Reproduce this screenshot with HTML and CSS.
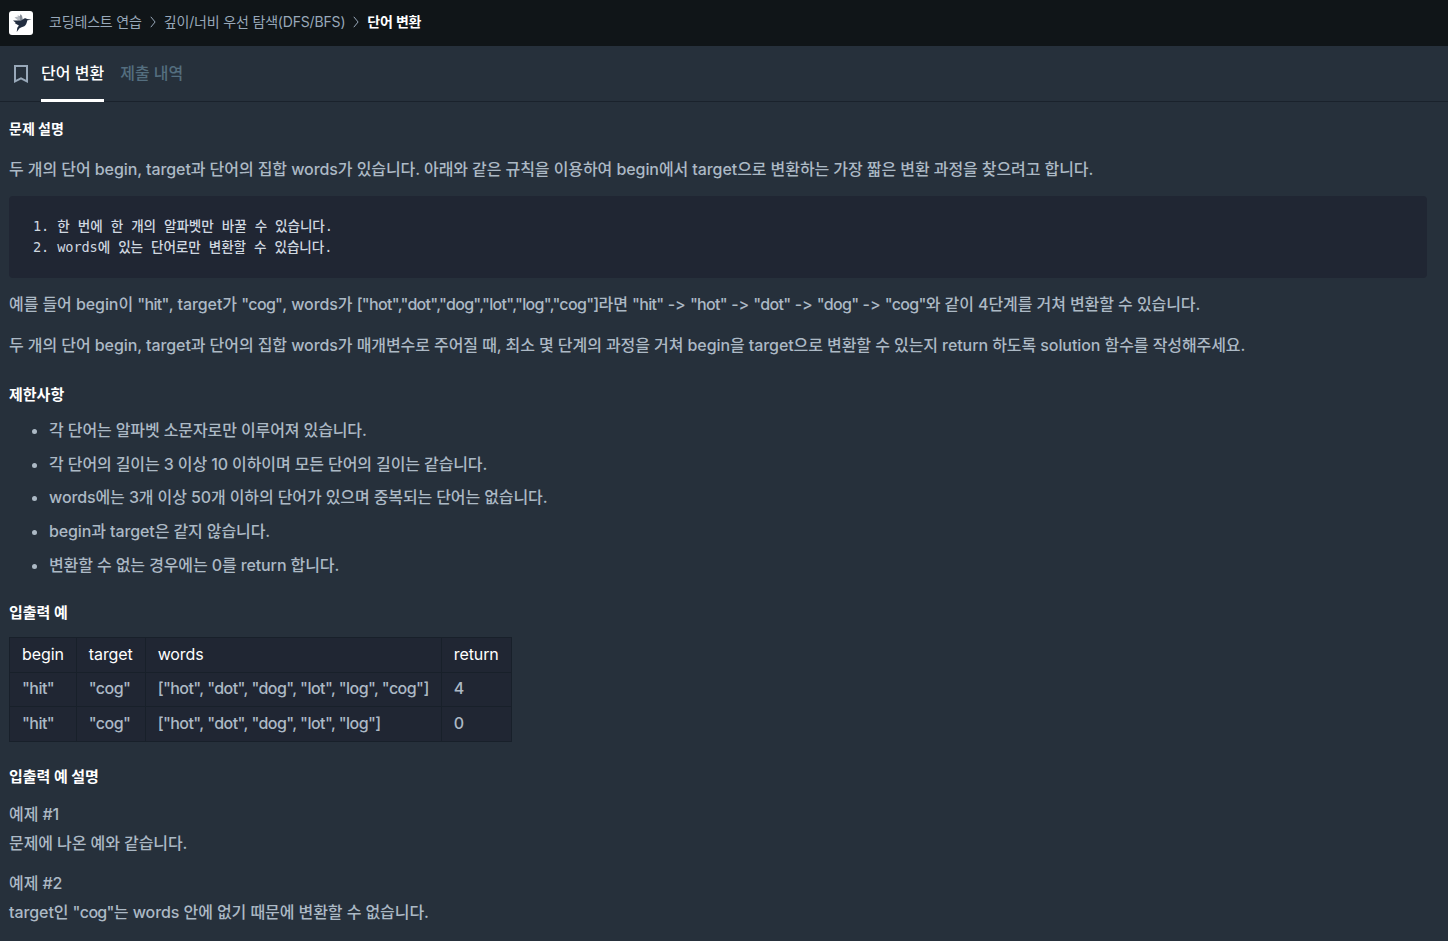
FILE: index.html
```html
<!DOCTYPE html>
<html lang="ko">
<head>
    <meta charset="UTF-8">
    <meta name="viewport" content="width=device-width, initial-scale=1.0">
    <title>코딩테스트 연습 - 단어 변환</title>
    <link rel="stylesheet" href="styles.css">
</head>
<body>

<header class="navbar">
    <a class="logo" href="#">
        <svg width="24" height="24" viewBox="0 0 24 24">
            <path fill="#b4b9c0" d="M5.5 6.4l2-.7 1 .5.3-2.2 1.8 1.6 1.2-2.4 1.3 2.2.6 3.8-4 .6z"/>
            <path fill="#848b95" d="M10.6 5.6l1.2-2.4 1.3 2.2.6 3.8-2.4.3z"/>
            <path fill="#222d3f" d="M4 9.4l8 .2 2.2-1.3c.6-.8 1.6-1.2 2.8-.9l1.2.7 4.4.6-4.2.6c-.3 1.1-.6 2.6-1.2 3.8-.9 1.9-2.6 2.9-4.7 3.2l-2 .9-2.8 3.7.6-4.1 1.6-2.2-2.3-1.4-1.9-1.2 1-.3z"/>
        </svg>
    </a>
    <ol class="breadcrumb">
        <li>코딩테스트 연습</li>
        <li>
            <svg class="arrow" width="6" height="12" viewBox="0 0 6 12"><path d="M.8.8l4.3 5.2L.8 11.2"/></svg>
            깊이/너비 우선 탐색(DFS/BFS)
        </li>
        <li class="current">
            <svg class="arrow" width="6" height="12" viewBox="0 0 6 12"><path d="M.8.8l4.3 5.2L.8 11.2"/></svg>
            단어 변환
        </li>
    </ol>
</header>

<nav class="tabs">
    <button class="bookmark" aria-label="북마크">
        <svg width="14" height="18" viewBox="0 0 14 18"><path d="M1 1h12v15.4l-6-3-6 3z"/></svg>
    </button>
    <a class="tab active" href="#">단어 변환</a>
    <a class="tab" href="#">제출 내역</a>
</nav>

<main class="guide">
    <h6 class="guide-title">문제 설명</h6>
    <p>두 개의 단어 begin, target과 단어의 집합 words가 있습니다. 아래와 같은 규칙을 이용하여 begin에서 target으로 변환하는 가장 짧은 변환 과정을 찾으려고 합니다.</p>
    <pre class="code">1. 한 번에 한 개의 알파벳만 바꿀 수 있습니다.
2. words에 있는 단어로만 변환할 수 있습니다.</pre>
    <p>예를 들어 begin이 <span class="literal">"hit"</span>, target가 <span class="literal">"cog"</span>, words가 <span class="literal">["hot","dot","dog","lot","log","cog"]</span>라면 <span class="literal">"hit"</span> -&gt; <span class="literal">"hot"</span> -&gt; <span class="literal">"dot"</span> -&gt; <span class="literal">"dog"</span> -&gt; <span class="literal">"cog"</span>와 같이 4단계를 거쳐 변환할 수 있습니다.</p>
    <p>두 개의 단어 begin, target과 단어의 집합 words가 매개변수로 주어질 때, 최소 몇 단계의 과정을 거쳐 begin을 target으로 변환할 수 있는지 return 하도록 solution 함수를 작성해주세요.</p>

    <h5>제한사항</h5>
    <ul>
        <li>각 단어는 알파벳 소문자로만 이루어져 있습니다.</li>
        <li>각 단어의 길이는 3 이상 10 이하이며 모든 단어의 길이는 같습니다.</li>
        <li>words에는 3개 이상 50개 이하의 단어가 있으며 중복되는 단어는 없습니다.</li>
        <li>begin과 target은 같지 않습니다.</li>
        <li>변환할 수 없는 경우에는 0를 return 합니다.</li>
    </ul>

    <h5>입출력 예</h5>
    <table>
        <thead>
            <tr>
                <th>begin</th>
                <th>target</th>
                <th>words</th>
                <th>return</th>
            </tr>
        </thead>
        <tbody>
            <tr>
                <td>"hit"</td>
                <td>"cog"</td>
                <td>["hot", "dot", "dog", "lot", "log", "cog"]</td>
                <td>4</td>
            </tr>
            <tr>
                <td>"hit"</td>
                <td>"cog"</td>
                <td>["hot", "dot", "dog", "lot", "log"]</td>
                <td>0</td>
            </tr>
        </tbody>
    </table>

    <h5 class="explain">입출력 예 설명</h5>
    <p>예제 #1<br>문제에 나온 예와 같습니다.</p>
    <p>예제 #2<br>target인 <span class="literal">"cog"</span>는 words 안에 없기 때문에 변환할 수 없습니다.</p>
</main>

</body>
</html>
```
FILE: styles.css
```css
* {
    box-sizing: border-box;
}
body {
    margin: 0;
    min-height: 941px;
    overflow: hidden;
    background: #26303b;
    color: #acb9c5;
    font-family: Inter, "Noto Sans CJK KR", sans-serif;
    font-size: 16px;
    font-weight: 400;
    font-feature-settings: "calt" 0;
}
a {
    color: inherit;
    text-decoration: none;
}
.navbar {
    display: flex;
    align-items: center;
    height: 46px;
    padding: 0 9px;
    background: #101518;
}
.logo {
    width: 24px;
    height: 24px;
    border-radius: 3px;
    background: #fff;
}
.logo svg {
    display: block;
}
.breadcrumb {
    display: flex;
    margin: 0 0 3px;
    padding: 0 0 0 16px;
    list-style: none;
    color: #98a8b9;
    font-size: 14px;
    line-height: 20px;
    letter-spacing: -0.17px;
}
.breadcrumb li {
    display: flex;
    align-items: center;
}
.breadcrumb .current {
    color: #fff;
    font-weight: 700;
}
.arrow {
    margin: 0 8px;
    fill: none;
    stroke: #98a8b9;
}
.tabs {
    display: flex;
    height: 56px;
    padding-left: 14px;
    border-bottom: 1px solid #1a222c;
}
.bookmark {
    width: 14px;
    margin-right: 13px;
    padding: 0;
    border: 0;
    background: none;
}
.bookmark svg {
    display: block;
    fill: none;
    stroke: #98a8b9;
    stroke-width: 2;
}
.tab {
    height: 56px;
    margin-right: 16px;
    color: #546e7f;
    font-weight: 500;
    line-height: 54px;
}
.tab.active {
    border-bottom: 3px solid #fff;
    color: #fff;
}
.guide {
    padding: 17px 21px 0 9px;
}
.guide-title,
h5 {
    margin: 0;
    color: #fff;
    font-size: 14px;
    font-weight: 700;
    line-height: 20px;
}
.guide-title {
    margin-bottom: 16px;
}
p {
    margin: 0 0 12px;
    font-weight: 500;
    line-height: 28.8px;
    letter-spacing: -0.08px;
    white-space: nowrap;
}
.literal {
    letter-spacing: -0.68px;
}
.code {
    height: 82px;
    margin: 0 0 12px;
    padding: 20px 24px;
    border-radius: 4px;
    background: #202633;
    color: #d0d8e0;
    font-family: "DejaVu Sans Mono", "Noto Sans CJK KR", monospace;
    font-size: 13.6px;
    font-weight: 500;
    line-height: 21px;
    letter-spacing: -0.1px;
}
h5 {
    margin-top: 25.7px;
    font-size: 15px;
}
ul {
    margin: 13px 0 0;
    padding-left: 40px;
}
ul li {
    margin-bottom: 9.7px;
    font-weight: 500;
    line-height: 24px;
    letter-spacing: -0.11px;
}
table {
    margin-top: 14.5px;
    border-collapse: collapse;
    background: #202633;
}
th, td {
    height: 34.6px;
    padding: 0 12px 2px;
    border: 1px solid #18202a;
    font-weight: 400;
    text-align: left;
}
th {
    color: #fff;
    letter-spacing: -0.1px;
}
td {
    font-weight: 500;
    letter-spacing: -0.56px;
}
h5.explain {
    margin: 25px 0 13px;
}
```
